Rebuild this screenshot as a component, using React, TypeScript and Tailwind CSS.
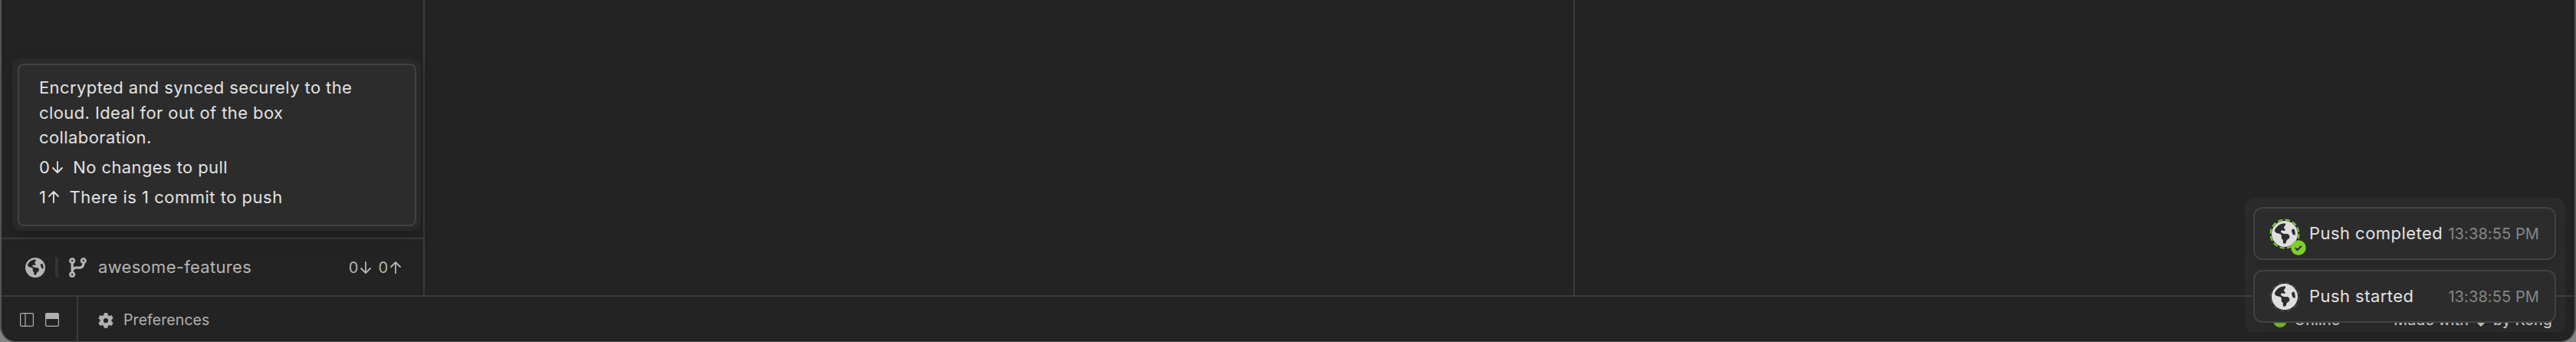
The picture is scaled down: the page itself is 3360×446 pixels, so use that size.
import React from 'react';
import { FaCodeBranch, FaEarthAmericas, FaGear } from 'react-icons/fa6';

const ArrowIcon: React.FC<{ up?: boolean; className?: string }> = ({ up, className }) => (
  <svg viewBox="0 0 14 16" className={className} fill="none" stroke="currentColor" strokeWidth="1.8" strokeLinecap="round" strokeLinejoin="round">
    {up ? <path d="M7 15V1M1 7l6-6 6 6" /> : <path d="M7 1v14M1 9l6 6 6-6" />}
  </svg>
);

const SidebarIcon: React.FC = () => (
  <svg viewBox="0 0 18 18" className="size-[18px]" fill="none" stroke="currentColor" strokeWidth="1.2">
    <rect x="0.6" y="0.6" width="16.8" height="16.8" rx="1.5" />
    <path d="M7 1v16" />
  </svg>
);

const LayoutIcon: React.FC = () => (
  <svg viewBox="0 0 18 18" className="size-[18px]" fill="none" stroke="currentColor" strokeWidth="1.2">
    <rect x="0.6" y="0.6" width="16.8" height="16.8" rx="1.5" />
    <path d="M1 1h16v7H1z" fill="currentColor" stroke="none" />
  </svg>
);

interface ToastProps {
  label: string;
  time: string;
  done?: boolean;
}

const Toast: React.FC<ToastProps> = ({ label, time, done }) => (
  <div className="flex h-[69px] items-center rounded-xl border-2 border-[#424242] bg-[#2c2c2c] pr-5 pl-[19px] shadow-[0_4px_12px_rgba(0,0,0,0.12)]">
    <div className="relative mr-3 size-10 shrink-0">
      <svg viewBox="0 0 40 40" className={`absolute inset-0 size-10 ${done ? 'text-[#7ecf2b]' : 'text-[#424242]'}`} fill="none">
        <circle cx="20" cy="20" r="18.5" stroke="currentColor" strokeWidth="2" strokeDasharray="6.3 3.387" />
      </svg>
      <FaEarthAmericas className="absolute top-[3px] left-[3px] size-[34px] text-[#dedede]" />
      {done && (
        <svg viewBox="0 0 20 20" className="absolute top-7 left-7 size-5" fill="none">
          <circle cx="10" cy="10" r="9.8" fill="#7ecf2b" />
          <path d="M5.8 10.3l2.8 2.7 5.3-5.3" stroke="#2c2c2c" strokeWidth="2" />
        </svg>
      )}
    </div>
    <span className="text-[22px] tracking-[0.45px] text-[#e2e2e2]">{label}</span>
    <span className="ml-auto text-[20px] tracking-[0.1px] text-[#868686]">{time}</span>
  </div>
);

const App: React.FC = () => {
  return (
    <div className="relative h-[446px] w-[3360px] overflow-hidden bg-[#858585] font-[Inter,sans-serif] whitespace-nowrap text-[#e2e2e2]">
      <div className="flex h-[446px] flex-col overflow-hidden rounded-b-[20px] border-x-2 border-b border-[#555] bg-[#232323]">
        <div className="flex h-[387px] shrink-0 border-b-2 border-[#3b3b3b]">
          <aside className="flex w-[552px] flex-col border-r-2 border-[#3b3b3b]">
            <div className="grow" />
            <div className="flex h-[75px] items-center border-t-2 border-[#3b3b3b] pr-[29px] pl-[31px] text-[#b4b4b4]">
              <FaEarthAmericas className="size-[26px]" />
              <span className="mr-[14px] ml-[13px] h-[26px] w-1 bg-[#343434]" />
              <FaCodeBranch className="h-[26px] w-[23px]" />
              <span className="ml-[15px] text-[22px] tracking-[0.3px]">awesome-features</span>
              <span className="ml-auto flex items-center text-[20px]">
                0<ArrowIcon className="mr-[9px] ml-[3px] h-4 w-[14px]" />
                0<ArrowIcon up className="ml-[3px] h-4 w-[14px]" />
              </span>
            </div>
          </aside>
          <main className="w-[1500px] border-r-2 border-[#3b3b3b]" />
          <section className="grow" />
        </div>
        <footer className="flex grow items-center text-[19.5px] tracking-[0.08px] text-[#b0b0b0]">
          <div className="flex h-full w-[100px] items-center gap-[15px] border-r-2 border-[#3b3b3b] pt-0.5 pl-6">
            <SidebarIcon />
            <LayoutIcon />
          </div>
          <div className="flex items-center pt-[3px] pl-[26px]">
            <FaGear className="size-[20px]" />
            <span className="ml-[13px]">Preferences</span>
          </div>
          <div className="ml-auto flex items-center pt-[3px] pr-[29px] font-medium text-[#ccc]">
            <span className="size-[18px] rounded-full bg-[#73be27]" />
            <span className="ml-[9px]">Online</span>
            <span className="ml-[70px]">Made with</span>
            <svg viewBox="0 0 18 18" className="mx-[7px] size-[18px]" fill="currentColor">
              <path d="M9 17L2 10C-1 6 1 1.5 5 1.5c2 0 3.3 1 4 2.3.7-1.3 2-2.3 4-2.3 4 0 6 4.5 3 8.5z" />
            </svg>
            <span>by Kong</span>
          </div>
        </footer>
      </div>

      {/* sync status tooltip */}
      <div className="absolute top-[76px] left-4 h-[225px] w-[533px] rounded-xl bg-[#292929] px-[7px] pt-[7px] shadow-[0_8px_20px_rgba(0,0,0,0.15)]">
        <div className="h-[212px] w-[520px] rounded-lg border-2 border-[#424242] bg-[#2c2c2c] px-[26px] pt-[13px] text-[22px] leading-[32.5px] tracking-[0.4px]">
          <p>Encrypted and synced securely to the<br />cloud. Ideal for out of the box<br />collaboration.</p>
          <p className="mt-[6px] flex items-center">
            0<ArrowIcon className="mr-[13px] ml-[3px] h-4 w-[14px]" />No changes to pull
          </p>
          <p className="mt-[6.5px] flex items-center tracking-[0.5px]">
            1<ArrowIcon up className="mr-[13px] ml-[3px] h-4 w-[14px]" />There is 1 commit to push
          </p>
        </div>
      </div>

      {/* notifications */}
      <div className="absolute top-[258px] left-[2928px] flex h-[175px] w-[418px] flex-col gap-[13px] rounded-xl bg-white/4 pt-3 pr-3 pl-[11px]">
        <Toast label="Push completed" time="13:38:55 PM" done />
        <Toast label="Push started" time="13:38:55 PM" />
      </div>
    </div>
  );
};

export default App;
